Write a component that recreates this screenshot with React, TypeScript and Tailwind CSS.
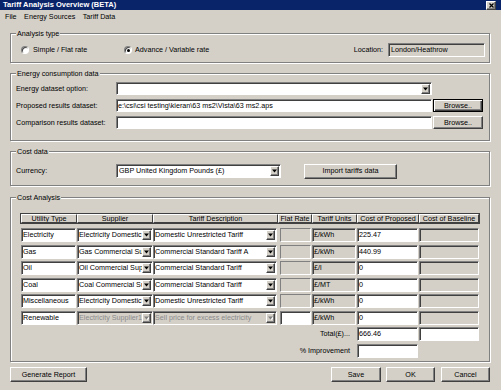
import React from 'react';

// classic win32 bevels
const raised =
  'bg-[#d4d0c8] border border-t-white border-l-white border-r-[#404040] border-b-[#404040] shadow-[inset_-1px_-1px_0_#808080]';
const sunken =
  'border border-t-[#808080] border-l-[#808080] border-r-white border-b-white shadow-[inset_1px_1px_0_#404040]';

interface FieldProps {
  value?: string;
  white?: boolean;
  flat?: boolean;
  className?: string;
}

const Field = ({ value = '', white = true, flat = false, className = '' }: FieldProps) => (
  <div
    className={`${
      flat
        ? 'border border-t-[#808080] border-l-[#808080] border-r-white border-b-white'
        : sunken
    } ${white ? 'bg-white' : 'bg-[#d4d0c8]'} h-full flex items-center px-[1px] overflow-hidden whitespace-nowrap ${className}`}
  >
    {value}
  </div>
);

const DropBtn = ({ disabled = false }: { disabled?: boolean }) => (
  <div className={`${raised} w-[9px] h-[10px] flex items-center justify-center shrink-0`}>
    <svg width="5" height="4" viewBox="0 0 5 4">
      {disabled && <polygon points="1,1 6,1 3.5,4" fill="#fff" />}
      <polygon points="0,0.5 5,0.5 2.5,3.5" fill={disabled ? '#808080' : '#000'} />
    </svg>
  </div>
);

interface ComboProps {
  value?: string;
  disabled?: boolean;
  className?: string;
}

const Combo = ({ value = '', disabled = false, className = '' }: ComboProps) => (
  <div
    className={`${sunken} ${disabled ? 'bg-[#d4d0c8]' : 'bg-white'} h-full flex items-center pl-[1px] pr-[1px] ${className}`}
  >
    <span
      className={`flex-1 min-w-0 overflow-hidden whitespace-nowrap ${disabled ? 'text-[#8a8a8a]' : ''}`}
    >
      {value}
    </span>
    <DropBtn disabled={disabled} />
  </div>
);

const Button = ({
  label,
  isDefault = false,
  className = '',
}: {
  label: string;
  isDefault?: boolean;
  className?: string;
}) => (
  <div
    className={`${
      isDefault
        ? 'bg-[#d4d0c8] border border-black shadow-[inset_1px_1px_0_#fff,inset_-1px_-1px_0_#404040,inset_-2px_-2px_0_#808080]'
        : raised
    } flex items-center justify-center ${className}`}
  >
    {label}
  </div>
);

const Group = ({
  title,
  className = '',
  children,
}: {
  title: string;
  className?: string;
  children?: React.ReactNode;
}) => (
  <div className={`border border-[#808080] shadow-[inset_1px_1px_0_#fff,1px_1px_0_#fff] ${className}`}>
    <div className="-mt-[4px] ml-[5px] w-fit bg-[#d4d0c8] px-[1px] h-[8px] leading-[8px]">{title}</div>
    {children}
  </div>
);

const Radio = ({ checked = false }: { checked?: boolean }) => (
  <div className="w-[8px] h-[8px] rounded-full bg-white border border-t-[#808080] border-l-[#808080] border-r-white border-b-white shadow-[inset_1px_1px_0_#404040] flex items-center justify-center shrink-0">
    {checked && <div className="w-[3px] h-[3px] rounded-full bg-black" />}
  </div>
);

const cols = 'grid grid-cols-[56px_76px_125px_34px_45px_62px_60px]';

interface Row {
  utility: string;
  supplier: string;
  tariff: string;
  units: string;
  proposed: string;
  disabled?: boolean;
}

// supplier names are shown as the list box clips them
const rows: Row[] = [
  { utility: 'Electricity', supplier: 'Electricity Domestic', tariff: 'Domestic Unrestricted Tariff', units: '£/kWh', proposed: '225.47' },
  { utility: 'Gas', supplier: 'Gas Commercial Su', tariff: 'Commercial Standard Tariff A', units: '£/kWh', proposed: '440.99' },
  { utility: 'Oil', supplier: 'Oil Commercial Sup', tariff: 'Commercial Standard Tariff', units: '£/l', proposed: '0' },
  { utility: 'Coal', supplier: 'Coal Commercial Su', tariff: 'Commercial Standard Tariff', units: '£/MT', proposed: '0' },
  { utility: 'Miscellaneous', supplier: 'Electricity Domestic', tariff: 'Domestic Unrestricted Tariff', units: '£/kWh', proposed: '0' },
  { utility: 'Renewable', supplier: 'Electricity Supplier1', tariff: 'Sell price for excess electricity', units: '£/kWh', proposed: '0', disabled: true },
];

const headers = ['Utility Type', 'Supplier', 'Tariff Description', 'Flat Rate', 'Tariff Units', 'Cost of Proposed', 'Cost of Baseline'];

const App = () => {
  return (
    <div className="w-[501px] h-[390px] bg-[#d4d0c8] font-['Liberation_Sans',Arial,sans-serif] text-[7.2px] leading-[8px] text-black flex flex-col overflow-hidden">
      {/* Title bar */}
      <div className="h-[10px] bg-[#0a246a] flex items-center justify-between pl-[3px] pr-[5px] shrink-0">
        <span className="text-white font-bold text-[7.5px]">Tariff Analysis Overview (BETA)</span>
        <div className={`${raised} w-[10px] h-[9px] flex items-center justify-center`}>
          <svg width="5" height="5" viewBox="0 0 5 5">
            <path d="M0.5 0.5 L4.5 4.5 M4.5 0.5 L0.5 4.5" stroke="#000" strokeWidth="1.2" />
          </svg>
        </div>
      </div>

      {/* Menu */}
      <div className="h-[13px] flex items-center gap-[7.5px] pl-[5px] shrink-0">
        <span>File</span>
        <span>Energy Sources</span>
        <span>Tariff Data</span>
      </div>

      <div className="flex flex-col pl-[10px] pr-[11px] pt-[10px]">
        {/* Analysis type */}
        <Group title="Analysis type" className="h-[30px]">
          <div className="mt-[5px] h-[14px] flex items-center pl-[10px] pr-[4px]">
            <div className="w-[103px] flex items-center gap-[4px]">
              <Radio />
              <span>Simple / Flat rate</span>
            </div>
            <div className="flex items-center gap-[3px]">
              <Radio checked />
              <span>Advance / Variable rate</span>
            </div>
            <div className="ml-auto flex items-center h-full gap-[5px]">
              <span>Location:</span>
              <Field value="London/Heathrow" white={false} className="w-[97px] pl-[2px]" />
            </div>
          </div>
        </Group>

        {/* Energy consumption data */}
        <Group title="Energy consumption data" className="mt-[10px] h-[68px]">
          <div className="mt-[4px] flex flex-col gap-[4px] pl-[5px]">
            <div className="h-[13px] flex items-center">
              <span className="w-[100px]">Energy dataset option:</span>
              <Combo className="w-[316px]" />
            </div>
            <div className="h-[13px] flex items-center">
              <span className="w-[100px]">Proposed results dataset:</span>
              <Field value={'e:\\csi\\csi testing\\kieran\\63 ms2\\Vista\\63 ms2.aps'} className="w-[316px]" />
              <Button label="Browse.." isDefault className="ml-[1px] w-[50px] h-full" />
            </div>
            <div className="h-[13px] flex items-center">
              <span className="w-[100px]">Comparison results dataset:</span>
              <Field className="w-[316px]" />
              <Button label="Browse.." className="ml-[1px] w-[50px] h-full" />
            </div>
          </div>
        </Group>

        {/* Cost data */}
        <Group title="Cost data" className="mt-[10px] h-[35px]">
          <div className="mt-[8px] h-[14px] flex items-center pl-[5px]">
            <span className="w-[100px]">Currency:</span>
            <Combo value="GBP United Kingdom Pounds (£)" className="w-[165px] pl-[2px]" />
            <Button label="Import tariffs data" className="ml-[23px] w-[93px] h-[15px]" />
          </div>
        </Group>

        {/* Cost Analysis */}
        <Group title="Cost Analysis" className="mt-[11px] h-[165px]">
          <div className="pl-[10px]">
            <div className={`${cols} mt-[12px] h-[9px] w-fit shadow-[0_0_0_1px_#404040]`}>
              {headers.map((h) => (
                <div
                  key={h}
                  className="flex items-center justify-center whitespace-nowrap overflow-hidden border border-t-white border-l-white border-r-[#404040] border-b-[#404040]"
                >
                  {h}
                </div>
              ))}
            </div>

            <div className="mt-[5px] flex flex-col gap-[2.5px]">
              {rows.map((r) => (
                <div key={r.utility} className={`${cols} h-[14px]`}>
                  <Field value={r.utility} className="mr-[1px]" />
                  <Combo value={r.supplier} disabled={r.disabled} />
                  <Combo value={r.tariff} disabled={r.disabled} className="mr-[1px]" />
                  <Field white={!!r.disabled} flat={!r.disabled} className="ml-[2px] mr-[1px]" />
                  <Field value={r.units} white={false} className="mr-[1px]" />
                  <Field value={r.proposed} className="mr-[1px]" />
                  <Field white={false} />
                </div>
              ))}

              <div className={`${cols} h-[14px]`}>
                <div className="col-span-5 flex items-center justify-end pr-[7px]">Total(£)...</div>
                <Field value="666.46" className="mr-[1px]" />
                <Field />
              </div>
              <div className={`${cols} h-[14px]`}>
                <div className="col-span-5 flex items-center justify-end pr-[7px]">% Improvement</div>
                <Field className="mr-[1px]" />
              </div>
            </div>
          </div>
        </Group>

        {/* Bottom buttons */}
        <div className="mt-[5px] h-[15px] flex items-center">
          <Button label="Generate Report" className="w-[77px] h-full" />
          <Button label="Save" className="ml-auto w-[50px] h-full" />
          <Button label="OK" className="ml-[5px] w-[49px] h-full" />
          <Button label="Cancel" className="ml-[6px] w-[49px] h-full" />
        </div>
      </div>
    </div>
  );
};

export default App;
